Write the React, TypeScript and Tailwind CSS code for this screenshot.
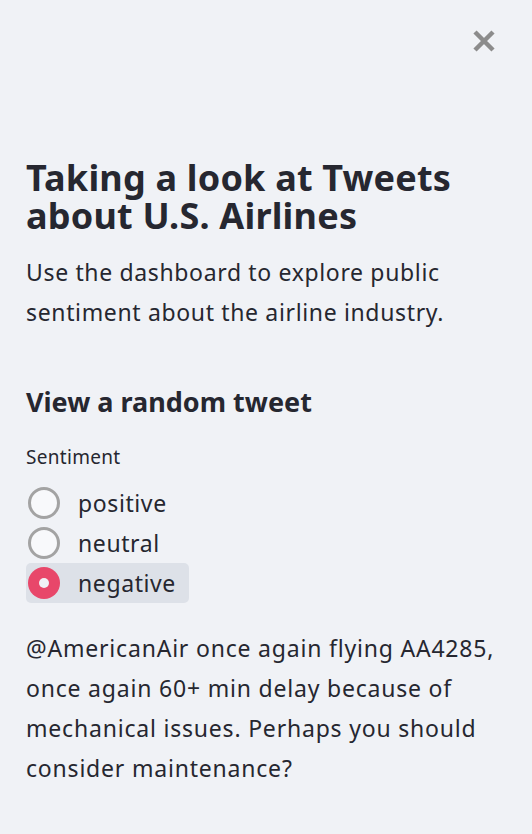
import React from "react";

const options = ["positive", "neutral", "negative"];

export default function App() {
  const selected = "negative";
  return (
    <div className="w-[532px] h-[834px] bg-[#f0f2f6] text-[#262730] font-['Noto_Sans',sans-serif] px-[26px] overflow-hidden">
      <div className="flex justify-end h-[159px] pt-[29px] pr-[10px]">
        <button className="w-[24px] h-[24px] flex items-center justify-center" aria-label="Close">
          <svg width="24" height="24" viewBox="0 0 24 24">
            <path d="M3 3 L21 21 M21 3 L3 21" stroke="#8c8c8c" strokeWidth="4.5" strokeLinecap="butt" />
          </svg>
        </button>
      </div>
      <h1 className="text-[36px] font-bold leading-[38px] tracking-[0.2px]">
        Taking a look at Tweets about U.S. Airlines
      </h1>
      <p className="mt-[17px] text-[23px] leading-[40px] tracking-[0.65px]">
        Use the dashboard to explore public sentiment about the airline industry.
      </p>
      <h3 className="mt-[52px] text-[27px] font-bold leading-[36px]">View a random tweet</h3>
      <div className="mt-[25px] text-[19px] leading-[24px] tracking-[0.3px]">Sentiment</div>
      <div className="mt-[14px] flex flex-col items-start">
        {options.map((o) => {
          const active = o === selected;
          return (
            <div
              key={o}
              className={
                active
                  ? "h-[40px] flex items-center pl-[2px] pr-[13px] rounded-[5px] bg-[#dde1e8]"
                  : "h-[40px] flex items-center pl-[2px] pr-[13px] rounded-[5px]"
              }
            >
              {active ? (
                <span className="w-[32px] h-[32px] rounded-full bg-[#e8476a] flex items-center justify-center">
                  <span className="w-[10px] h-[10px] rounded-full bg-[#f0f2f6]" />
                </span>
              ) : (
                <span className="w-[32px] h-[32px] rounded-full border-[3px] border-[#a3a3a3] bg-[#f8f9fb]" />
              )}
              <span className="ml-[18px] text-[23px] leading-[40px] tracking-[0.6px]">{o}</span>
            </div>
          );
        })}
      </div>
      <p className="mt-[25px] text-[23px] leading-[40px] tracking-[0.8px]">
        @AmericanAir once again flying AA4285, once again 60+ min delay because of mechanical issues. Perhaps you should consider maintenance?
      </p>
    </div>
  );
}
